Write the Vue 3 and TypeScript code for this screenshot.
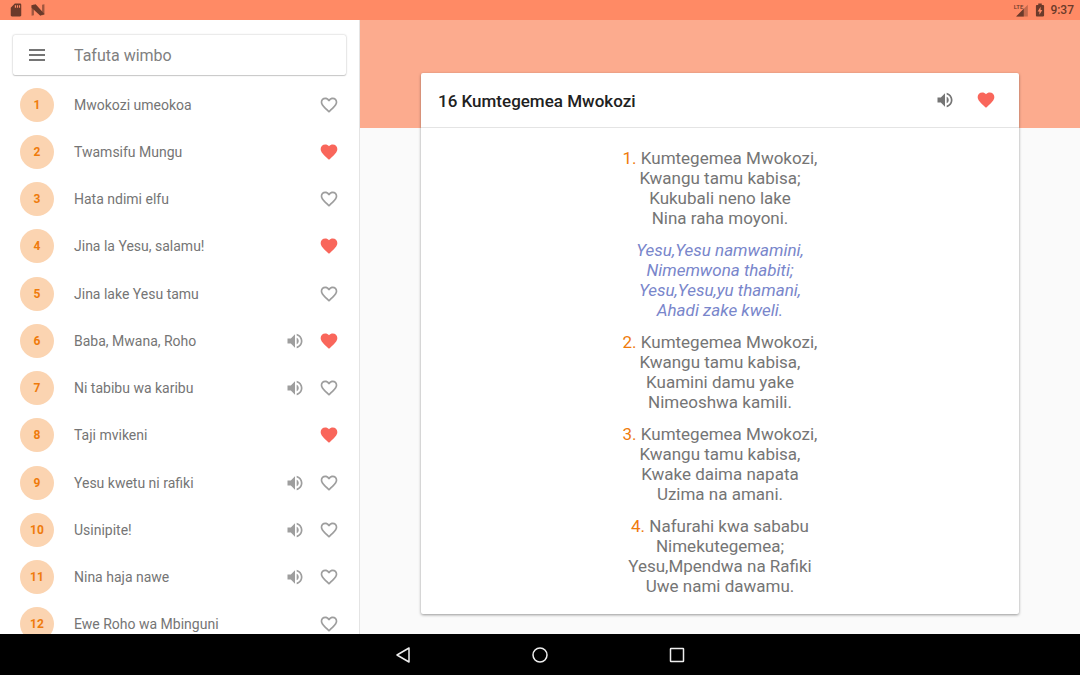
<script setup lang="ts">
import { ref } from 'vue'

interface Song {
  no: number
  title: string
  audio: boolean
  liked: boolean
}

interface Stanza {
  no?: number
  lines: string[]
}

const HEART =
  'M12 21.35l-1.45-1.32C5.4 15.36 2 12.28 2 8.5 2 5.42 4.42 3 7.5 3c1.74 0 3.41.81 4.5 2.09C13.09 3.81 14.76 3 16.5 3 19.58 3 22 5.42 22 8.5c0 3.78-3.4 6.86-8.55 11.54L12 21.35z'
const HEART_OUTLINE =
  'M16.5 3c-1.74 0-3.41.81-4.5 2.09C10.91 3.81 9.24 3 7.5 3 4.42 3 2 5.42 2 8.5c0 3.78 3.4 6.86 8.55 11.54L12 21.35l1.45-1.32C18.6 15.36 22 12.28 22 8.5 22 5.42 19.58 3 16.5 3zm-4.4 15.55l-.1.1-.1-.1C7.14 14.24 4 11.39 4 8.5 4 6.5 5.5 5 7.5 5c1.54 0 3.04.99 3.57 2.36h1.87C13.46 5.99 14.96 5 16.5 5c2 0 3.5 1.5 3.5 3.5 0 2.89-3.14 5.74-7.9 10.05z'
const VOLUME =
  'M3 9v6h4l5 5V4L7 9H3zm13.5 3c0-1.77-1.02-3.29-2.5-4.03v8.05c1.48-.73 2.5-2.25 2.5-4.02zM14 3.23v2.06c2.89.86 5 3.54 5 6.71s-2.11 5.85-5 6.71v2.06c4.01-.91 7-4.49 7-8.77s-2.99-7.86-7-8.77z'

const query = ref('')

const songs = ref<Song[]>([
  { no: 1, title: 'Mwokozi umeokoa', audio: false, liked: false },
  { no: 2, title: 'Twamsifu Mungu', audio: false, liked: true },
  { no: 3, title: 'Hata ndimi elfu', audio: false, liked: false },
  { no: 4, title: 'Jina la Yesu, salamu!', audio: false, liked: true },
  { no: 5, title: 'Jina lake Yesu tamu', audio: false, liked: false },
  { no: 6, title: 'Baba, Mwana, Roho', audio: true, liked: true },
  { no: 7, title: 'Ni tabibu wa karibu', audio: true, liked: false },
  { no: 8, title: 'Taji mvikeni', audio: false, liked: true },
  { no: 9, title: 'Yesu kwetu ni rafiki', audio: true, liked: false },
  { no: 10, title: 'Usinipite!', audio: true, liked: false },
  { no: 11, title: 'Nina haja nawe', audio: true, liked: false },
  { no: 12, title: 'Ewe Roho wa Mbinguni', audio: false, liked: false },
])

const stanzas: Stanza[] = [
  { no: 1, lines: ['Kumtegemea Mwokozi,', 'Kwangu tamu kabisa;', 'Kukubali neno lake', 'Nina raha moyoni.'] },
  { lines: ['Yesu,Yesu namwamini,', 'Nimemwona thabiti;', 'Yesu,Yesu,yu thamani,', 'Ahadi zake kweli.'] },
  { no: 2, lines: ['Kumtegemea Mwokozi,', 'Kwangu tamu kabisa,', 'Kuamini damu yake', 'Nimeoshwa kamili.'] },
  { no: 3, lines: ['Kumtegemea Mwokozi,', 'Kwangu tamu kabisa,', 'Kwake daima napata', 'Uzima na amani.'] },
  { no: 4, lines: ['Nafurahi kwa sababu', 'Nimekutegemea;', 'Yesu,Mpendwa na Rafiki', 'Uwe nami dawamu.'] },
]
</script>

<template>
  <div class="screen">
    <header class="status">
      <svg class="s-icon" viewBox="0 0 24 24" aria-hidden="true">
        <path d="M19 1H10L3 8v13c0 1 1 2 2 2h14c1 0 2-1 2-2V3c0-1-1-2-2-2zm-7 7h-2V4h2v4zm3.500 0h-2V4h2v4zm3.500 0h-2V4h2v4z" />
      </svg>
      <svg class="s-icon" viewBox="0 0 24 24" aria-hidden="true">
        <path d="M1 4l4-1v18l-4 1zM19 3l4-1v18l-4 1z" opacity="0.65" />
        <path d="M1 4l7-2 15 17-7 3L1 8z" />
      </svg>
      <span class="spacer"></span>
      <span class="signal">
        <span class="lte">LTE</span>
        <svg class="s-icon" viewBox="0 0 24 24" aria-hidden="true">
          <path d="M2 23h20V3z" opacity="0.4" />
          <path d="M2 23h13V10z" />
        </svg>
      </span>
      <svg class="s-icon" viewBox="0 0 24 24" aria-hidden="true">
        <path d="M17.500 3.500H15V1H9v2.500H6.500C5.500 3.500 5 4.200 5 5v16.500c0 1 .7 1.500 1.500 1.500h11c1 0 1.500-.7 1.500-1.500V5c0-1-.7-1.500-1.500-1.500zM11 20v-5.500H8L13 6.500v5.500h3L11 20z" />
      </svg>
      <time class="clock">9:37</time>
    </header>

    <div class="body">
      <aside class="side">
        <form class="search" role="search" @submit.prevent>
          <button type="button" class="menu" aria-label="Menu">
            <svg class="ic24" viewBox="0 0 24 24"><path d="M4 6h16v2H4zM4 11h16v2H4zM4 16h16v2H4z" /></svg>
          </button>
          <input v-model="query" type="text" aria-label="Tafuta wimbo" placeholder="Tafuta wimbo" />
        </form>
        <ul class="songs">
          <li v-for="s in songs" :key="s.no" class="song">
            <span class="badge">{{ s.no }}</span>
            <a href="#" class="name" @click.prevent>{{ s.title }}</a>
            <button v-if="s.audio" type="button" class="icon-btn" aria-label="Sikiliza">
              <svg class="ic" viewBox="0 0 24 24"><path :d="VOLUME" /></svg>
            </button>
            <button
              type="button"
              class="icon-btn"
              :class="{ liked: s.liked }"
              :aria-pressed="s.liked"
              aria-label="Pendwa"
              @click="s.liked = !s.liked"
            >
              <svg class="ic" viewBox="0 0 24 24"><path :d="s.liked ? HEART : HEART_OUTLINE" /></svg>
            </button>
          </li>
        </ul>
      </aside>

      <main class="detail">
        <article class="card">
          <div class="card-head">
            <h1>16 Kumtegemea Mwokozi</h1>
            <button type="button" class="icon-btn dark" aria-label="Sikiliza">
              <svg class="ic" viewBox="0 0 24 24"><path :d="VOLUME" /></svg>
            </button>
            <button type="button" class="icon-btn liked" aria-label="Pendwa" aria-pressed="true">
              <svg class="ic" viewBox="0 0 24 24"><path :d="HEART" /></svg>
            </button>
          </div>
          <div class="lyrics">
            <p v-for="(st, i) in stanzas" :key="i" :class="{ chorus: !st.no }">
              <span v-for="(line, j) in st.lines" :key="j" class="line">
                <template v-if="st.no && j === 0"><span class="num">{{ st.no }}.</span>&nbsp;</template>{{ line }}
              </span>
            </p>
          </div>
        </article>
      </main>
    </div>

    <nav class="navbar">
      <button type="button" aria-label="Back">
        <svg viewBox="0 0 20 20"><path d="M16 3v14L4 10z" /></svg>
      </button>
      <button type="button" aria-label="Home">
        <svg viewBox="0 0 20 20"><circle cx="10" cy="10" r="7" /></svg>
      </button>
      <button type="button" aria-label="Recent">
        <svg viewBox="0 0 20 20"><rect x="3.500" y="3.500" width="13" height="13" rx="0.500" /></svg>
      </button>
    </nav>
  </div>
</template>

<style>
body {
  margin: 0;
}
</style>

<style scoped>
.screen {
  display: flex;
  flex-direction: column;
  height: 100vh;
  overflow: hidden;
  font-family: Roboto, 'Liberation Sans', sans-serif;
  color: #757575;
  background: #fafafa;
}
button {
  display: flex;
  align-items: center;
  justify-content: center;
  padding: 0;
  border: 0;
  background: none;
  color: inherit;
  cursor: pointer;
}
svg {
  display: block;
  flex: none;
  fill: currentColor;
}

.status {
  display: flex;
  align-items: center;
  gap: 8px;
  flex: none;
  height: 20px;
  padding: 0 6px 0 9px;
  background: #ff8a65;
  color: #6b3a2a;
}
.s-icon {
  width: 14px;
  height: 14px;
}
.spacer {
  flex: 1;
}
.signal {
  display: flex;
  align-items: flex-start;
}
.lte {
  margin-right: -8px;
  font-size: 6px;
  font-weight: 500;
  line-height: 8px;
}
.signal + .s-icon {
  margin: 0 -5px 0 -4px;
}
.clock {
  font-size: 12px;
  font-weight: 500;
  line-height: 20px;
}

.body {
  display: grid;
  grid-template-columns: 1fr 2fr;
  grid-template-rows: minmax(0, 1fr);
  flex: 1;
  min-height: 0;
}
.side {
  display: flex;
  flex-direction: column;
  min-width: 0;
  overflow: hidden;
  border-right: 1px solid #e4e4e4;
  background: #fff;
}
.search {
  display: flex;
  align-items: center;
  flex: none;
  height: 40px;
  margin: 15px 13px 6px;
  border-radius: 2px;
  background: #fff;
  box-shadow: 0 0 2px rgba(0, 0, 0, 0.3), 0 1px 1px rgba(0, 0, 0, 0.15);
}
.menu {
  width: 48px;
  height: 40px;
}
.ic24 {
  width: 24px;
  height: 24px;
}
.search input {
  flex: 1;
  min-width: 0;
  margin-left: 13px;
  padding: 2px 0 0;
  border: 0;
  outline: 0;
  background: none;
  font: 16px/24px Roboto, 'Liberation Sans', sans-serif;
  color: #424242;
}
.search input::placeholder {
  color: #808080;
  opacity: 1;
}

.songs {
  display: grid;
  grid-auto-rows: 1fr;
  flex: none;
  height: 567px;
  margin: 0;
  padding: 0 13px 0 20px;
  list-style: none;
}
.song {
  display: flex;
  align-items: center;
}
.badge {
  flex: none;
  width: 34px;
  margin-right: 20px;
  border-radius: 50%;
  background: #fbd4b1;
  color: #ef7b0c;
  font-size: 12px;
  font-weight: 700;
  line-height: 34px;
  text-align: center;
}
.name {
  flex: 1;
  color: #757575;
  font-size: 14px;
  line-height: 20px;
  text-decoration: none;
}
.icon-btn {
  width: 34px;
  height: 34px;
  color: #9e9e9e;
}
.icon-btn.dark {
  color: #757575;
}
.icon-btn.liked {
  color: #f9665b;
}
.ic {
  width: 20px;
  height: 20px;
}

.detail {
  display: flex;
  min-width: 0;
  padding: 53px 61px 20px;
  background: linear-gradient(#fcab8e, #fcab8e) top / 100% 108px no-repeat #fafafa;
}
.card {
  flex: 1;
  min-width: 0;
  border-radius: 2px;
  background: #fff;
  box-shadow: 0 1px 3px rgba(0, 0, 0, 0.4);
}
.card-head {
  display: flex;
  align-items: center;
  height: 54px;
  padding: 0 16px 0 17px;
  border-bottom: 1px solid #e4e4e4;
}
.card-head h1 {
  flex: 1;
  margin: 0;
  padding-top: 2px;
  color: #212121;
  font-size: 17px;
  font-weight: 500;
  line-height: 24px;
}
.card-head .liked {
  margin-left: 7px;
}
.lyrics {
  display: flex;
  flex-direction: column;
  gap: 12px;
  padding: 20px 16px;
  font-size: 17px;
  line-height: 20px;
  text-align: center;
}
.lyrics p {
  margin: 0;
}
.line {
  display: block;
}
.num {
  color: #ef7b0c;
}
.chorus {
  color: #7986cb;
  font-style: italic;
}

.navbar {
  display: flex;
  justify-content: center;
  flex: none;
  height: 41px;
  background: #000;
}
.navbar button {
  width: 137px;
}
.navbar svg {
  width: 20px;
  height: 20px;
  fill: none;
  stroke: #eee;
  stroke-width: 1.500;
  stroke-linejoin: round;
}
</style>
